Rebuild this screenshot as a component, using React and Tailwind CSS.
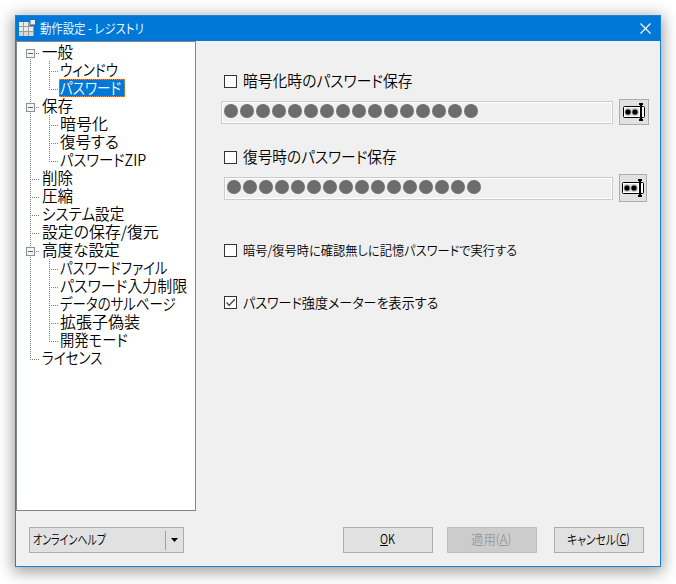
import { useLayoutEffect, useRef, useState } from 'react'

const TREE = [
  { text: '一般', w: 31, open: true },
  { text: 'ウィンドウ', w: 58, child: true },
  { text: 'パスワード', w: 61, child: true, selected: true, last: true },
  { text: '保存', w: 31, open: true },
  { text: '暗号化', w: 48, child: true },
  { text: '復号する', w: 59, child: true },
  { text: 'パスワードZIP', w: 86, child: true, last: true },
  { text: '削除', w: 31 },
  { text: '圧縮', w: 31 },
  { text: 'システム設定', w: 82 },
  { text: '設定の保存/復元', w: 117 },
  { text: '高度な設定', w: 78, open: true },
  { text: 'パスワードファイル', w: 108, child: true },
  { text: 'パスワード入力制限', w: 127, child: true },
  { text: 'データのサルベージ', w: 116, child: true },
  { text: '拡張子偽装', w: 80, child: true },
  { text: '開発モード', w: 68, child: true, last: true },
  { text: 'ライセンス', w: 60, end: true },
]

// condenses a line of text to a fixed width, like the narrow kana of the system font
function Fit({ w, className = '', children }) {
  const ref = useRef(null)
  const [scale, setScale] = useState(1)

  useLayoutEffect(() => {
    const measure = () => { if (ref.current.offsetWidth) setScale(w / ref.current.offsetWidth) }
    measure()
    document.fonts.ready.then(measure)
  }, [w])

  return (
    <span className="block shrink-0" style={{ width: w }}>
      <span
        ref={ref}
        className={`block w-max origin-left whitespace-nowrap [font-feature-settings:'palt'] ${className}`}
        style={{ transform: `scaleX(${scale})` }}
      >
        {children}
      </span>
    </span>
  )
}

function Branch({ item, index }) {
  const width = item.child ? 43 : 25
  return (
    <svg width={width} height="18" className="shrink-0" shapeRendering="crispEdges" fill="none" stroke="#808080" strokeDasharray="1 1">
      <path d={`M13.5 ${index === 0 ? 10 : 0}V${item.end ? 11 : 18}`} />
      {item.child && <path d={`M32.5 0V${item.last ? 11 : 18}`} />}
      {item.child ? <path d="M32 10.5H42" /> : <path d="M13 10.5H23" />}
      {item.open && (
        <g strokeDasharray="none">
          <rect x="9.5" y="6.5" width="8" height="8" fill="#f4f4f4" stroke="#919191" />
          <path d="M11 10.5H16" stroke="#4b63a7" />
        </g>
      )}
    </svg>
  )
}

function TreeRow({ item, index }) {
  return (
    <div className="flex h-[18px] items-center">
      <Branch item={item} index={index} />
      {item.selected ? (
        <div className="-ml-px h-[18px] w-[66px] border border-dotted border-[#ff8728] bg-[#0078d7] text-white">
          <Fit w={item.w} className="text-[16px] leading-[14px]">{item.text}</Fit>
        </div>
      ) : (
        <Fit w={item.w} className="-mt-[2px] text-[16px] leading-[16px]">{item.text}</Fit>
      )}
    </div>
  )
}

function Check({ label, w, checked, className = '' }) {
  return (
    <label className="flex h-[18px] items-center">
      <span className="mr-[6px] ml-[3px] h-[13px] w-[13px] shrink-0 border border-[#333] bg-white">
        {checked && (
          <svg width="11" height="11" fill="none" stroke="#444" strokeWidth="1.3"><path d="M1.5 5.5L4.2 8.2L9.8 2.2" /></svg>
        )}
      </span>
      <Fit w={w} className={className}>{label}</Fit>
    </label>
  )
}

function Password({ className }) {
  return (
    <div className={`flex h-[23px] gap-[2px] border border-[#ccc] pt-px pl-[2px] shadow-[inset_0_0_0_1px_#fff] ${className}`}>
      {Array.from({ length: 16 }, (_, i) => (
        <span key={i} className="mt-px h-[14px] w-[14px] shrink-0 rounded-full bg-[#6d6d6d]" />
      ))}
    </div>
  )
}

function FieldIcon() {
  return (
    <svg width="22" height="18" viewBox="0 0 22 18" fill="none">
      <rect x=".5" y="3.5" width="21" height="11" rx="1" fill="#fff" stroke="#000" />
      <rect x="2" y="5" width="14" height="8" fill="#e4e4e4" />
      <circle cx="5" cy="9" r="3.4" fill="#aaa" />
      <circle cx="12" cy="9" r="3.4" fill="#aaa" />
      <circle cx="5" cy="9" r="2.6" fill="#000" />
      <circle cx="12" cy="9" r="2.6" fill="#000" />
      <path d="M18 1V17" stroke="#000" strokeWidth="2" />
      <path d="M16 1H20M16 17H20" stroke="#000" strokeWidth="2" />
    </svg>
  )
}

function Button({ className = '', children }) {
  return (
    <button className={`flex h-[26px] w-[90px] items-center justify-center border pr-[2px] text-[13px] leading-[18px] ${className}`}>
      {children}
    </button>
  )
}

function TitleBar() {
  return (
    <div className="flex h-[25px] items-center bg-[#0078d7] pr-[9px] pl-[3px] text-white">
      <svg width="17" height="17" shapeRendering="crispEdges" className="mr-[4px]">
        <path d="M0 2H11V6H15V16H0Z" fill="#9b9b9b" />
        {[0, 1, 2].map(r => [0, 1, 2].map(c => (
          !(r === 0 && c === 2) && <rect key={`${r}${c}`} x={c * 5} y={2 + r * 5} width="4" height="4" fill={r === 2 ? '#d6d6d6' : '#ececec'} />
        )))}
        <rect x="11" y="0" width="5" height="5" fill="#9b9b9b" />
        <rect x="12" y="0" width="4" height="4" fill="#f2ede6" />
      </svg>
      <Fit w={104} className="-mt-[2px] text-[13px] leading-[18px] font-[350]">動作設定 - レジストリ</Fit>
      <svg width="11" height="11" className="ml-auto" fill="none" stroke="#fff" strokeWidth="1.2"><path d="M.5 .5L10.5 10.5M10.5 .5L.5 10.5" /></svg>
    </div>
  )
}

export default function App() {
  return (
    <div className="h-[584px] w-[676px] overflow-hidden bg-white p-[15px] font-['Noto_Sans_CJK_JP',sans-serif] font-[350] text-black">
      <div className="flex h-[552px] w-[646px] flex-col border border-[#1883d7] bg-[#f0f0f0] shadow-[0_3px_14px_2px_rgba(0,0,0,0.38)]">
        <TitleBar />
        <div className="flex h-[470px]">
          <div className="w-[180px] border border-[#828790] bg-white pt-px">
            {TREE.map((item, i) => <TreeRow key={item.text} item={item} index={i} />)}
          </div>
          <div className="flex flex-1 flex-col pt-[31px] pl-[25px]">
            <Check label="暗号化時のパスワード保存" w={170} className="-mt-[2px] text-[16px] leading-[18px]" />
            <div className="mt-[9px] flex items-center">
              <Password className="w-[392px]" />
              <button className="ml-[6px] flex h-[26px] w-[30px] items-center justify-center border border-[#adadad] bg-[#e1e1e1]"><FieldIcon /></button>
            </div>
            <div className="mt-[23px]">
              <Check label="復号時のパスワード保存" w={154} className="-mt-[2px] text-[16px] leading-[18px]" />
            </div>
            <div className="mt-[8px] flex items-center pl-[3px]">
              <Password className="w-[389px]" />
              <button className="ml-[6px] flex h-[28px] w-[28px] items-center justify-center border border-[#adadad] bg-[#e1e1e1]"><FieldIcon /></button>
            </div>
            <div className="mt-[39px]">
              <Check label="暗号/復号時に確認無しに記憶パスワードで実行する" w={274} className="text-[13px] leading-[18px]" />
            </div>
            <div className="mt-[34px]">
              <Check label="パスワード強度メーターを表示する" w={195} checked className="text-[14px] leading-[18px]" />
            </div>
          </div>
        </div>
        <div className="flex pt-[16px] pl-[13px]">
          <button className="flex h-[26px] w-[155px] items-center border border-[#adadad] bg-[#e1e1e1] pl-[3px]">
            <Fit w={73} className="-mt-[2px] text-left text-[13px] leading-[18px]">オンラインヘルプ</Fit>
            <span className="ml-auto h-[19px] w-px bg-[#a0a0a0]" />
            <svg width="7" height="4" className="mr-[5px] ml-[5px]"><path d="M0 0H7L3.5 4Z" /></svg>
          </button>
          <Button className="ml-[159px] border-[#adadad] bg-[#e1e1e1]"><Fit w={15} className="-mt-[2px]"><u>O</u>K</Fit></Button>
          <Button className="ml-[14px] border-[#bfbfbf] bg-[#ccc] text-[#989898]"><Fit w={40} className="-mt-[2px]">適用(<u>A</u>)</Fit></Button>
          <Button className="ml-[17px] border-[#adadad] bg-[#e1e1e1]"><Fit w={63} className="-mt-[2px]">キャンセル(<u>C</u>)</Fit></Button>
        </div>
      </div>
    </div>
  )
}
